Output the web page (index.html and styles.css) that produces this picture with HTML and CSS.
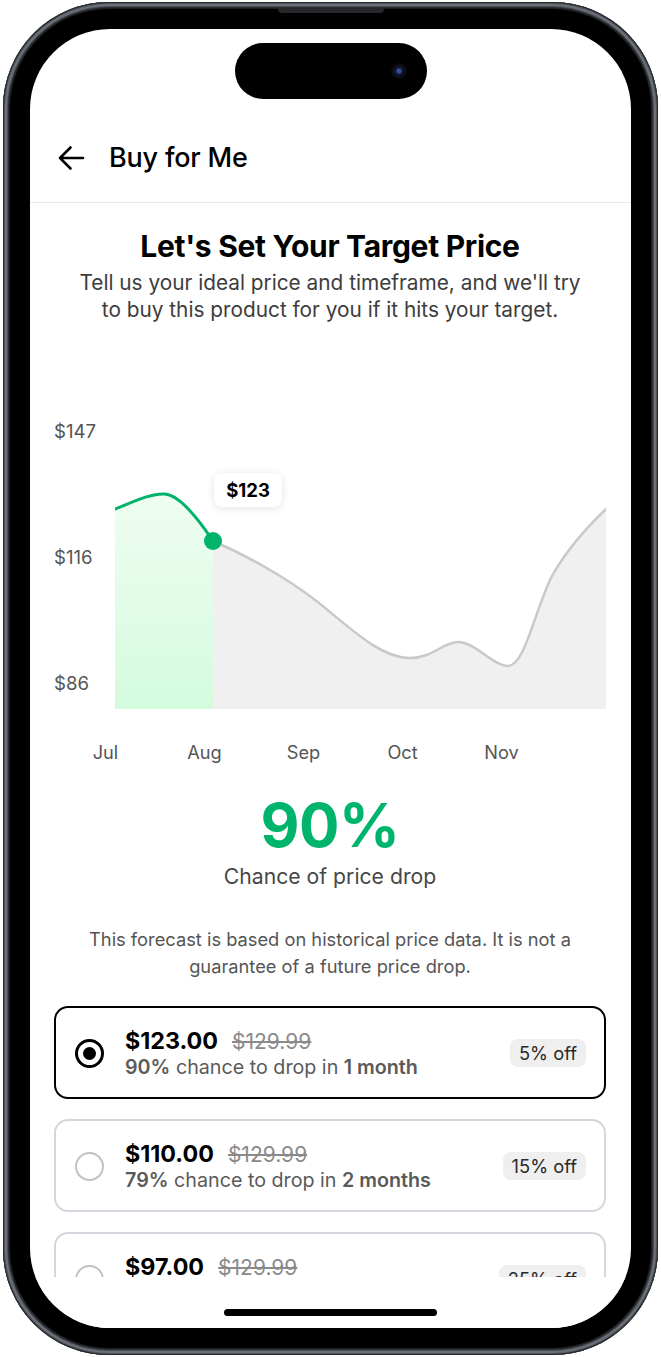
FILE: index.html
```html
<!DOCTYPE html>
<html lang="en">
<head>
<meta charset="utf-8">
<title>Buy for Me</title>
<link rel="stylesheet" href="styles.css">
</head>
<body>
<div class="page">
  <div class="phone">
    <span class="side-btn btn-action"></span>
    <span class="side-btn btn-vol-up"></span>
    <span class="side-btn btn-vol-down"></span>
    <span class="side-btn btn-power"></span>
    <span class="speaker"></span>
    <div class="bezel">
      <div class="screen">
        <div class="status">
          <div class="island"><span class="cam"></span></div>
        </div>
        <header class="appbar">
          <svg class="back" viewBox="0 0 28 26" width="28" height="26" aria-hidden="true">
            <path d="M26 13 H3 M13.5 2.5 L3 13 L13.5 23.5" fill="none" stroke="#000" stroke-width="2.6" stroke-linecap="round" stroke-linejoin="round"/>
          </svg>
          <h1 class="appbar-title">Buy for Me</h1>
        </header>
        <main class="content">
          <h2 class="heading">Let's Set Your Target Price</h2>
          <p class="sub">Tell us your ideal price and timeframe, and we'll try to buy this product for you if it hits your target.</p>

          <section class="chart">
            <div class="yaxis">
              <span>$147</span>
              <span>$116</span>
              <span>$86</span>
            </div>
            <div class="plot">
              <svg viewBox="0 0 491 290" width="491" height="290" aria-hidden="true">
                <defs>
                  <linearGradient id="greenFill" x1="0" y1="0" x2="0" y2="1">
                    <stop offset="0" stop-color="#effdf2"/>
                    <stop offset="1" stop-color="#d4fbde"/>
                  </linearGradient>
                </defs>
                <path d="M0,90 C18,83 36,74 50,75 C64,76 82,98 98,122 L98,290 L0,290 Z" fill="url(#greenFill)"/>
                <path d="M98,122 C140,140 185,167 215,193 C245,218 270,239 295,239 C318,239 328,223 343,223 C360,223 378,247 393,247 C410,247 420,190 437,157 C450,134 468,112 491,90 L491,290 L98,290 Z" fill="#f0f0f0"/>
                <path d="M98,122 C140,140 185,167 215,193 C245,218 270,239 295,239 C318,239 328,223 343,223 C360,223 378,247 393,247 C410,247 420,190 437,157 C450,134 468,112 491,90" fill="none" stroke="#c9c9c9" stroke-width="2.5" stroke-linecap="round"/>
                <path d="M0,90 C18,83 36,74 50,75 C64,76 82,98 98,122" fill="none" stroke="#00b36b" stroke-width="3" stroke-linecap="round"/>
                <circle cx="98" cy="122" r="9" fill="#00b36b"/>
              </svg>
              <div class="tip">$123</div>
            </div>
            <div class="xaxis">
              <span>Jul</span>
              <span>Aug</span>
              <span>Sep</span>
              <span>Oct</span>
              <span>Nov</span>
            </div>
          </section>

          <div class="stat">90%</div>
          <div class="stat-label">Chance of price drop</div>
          <p class="note">This forecast is based on historical price data. It is not a guarantee of a future price drop.</p>

          <div class="options">
            <div class="option selected">
              <span class="radio"></span>
              <div class="option-info">
                <div class="price-row"><span class="price">$123.00</span><span class="was">$129.99</span></div>
                <div class="chance"><b>90%</b> chance to drop in <b>1 month</b></div>
              </div>
              <span class="badge">5% off</span>
            </div>
            <div class="option">
              <span class="radio"></span>
              <div class="option-info">
                <div class="price-row"><span class="price">$110.00</span><span class="was">$129.99</span></div>
                <div class="chance"><b>79%</b> chance to drop in <b>2 months</b></div>
              </div>
              <span class="badge">15% off</span>
            </div>
            <div class="option">
              <span class="radio"></span>
              <div class="option-info">
                <div class="price-row"><span class="price">$97.00</span><span class="was">$129.99</span></div>
                <div class="chance"><b>65%</b> chance to drop in <b>3 months</b></div>
              </div>
              <span class="badge">25% off</span>
            </div>
          </div>
        </main>
        <div class="home"><span class="indicator"></span></div>
      </div>
    </div>
  </div>
</div>
</body>
</html>
```
FILE: styles.css
```css
* { box-sizing: border-box; }

html, body {
  margin: 0;
  padding: 0;
  background: #ffffff;
}

body {
  font-family: Inter, "Noto Sans", "Liberation Sans", sans-serif;
  color: #000;
}

.page {
  padding: 2px 3px;
}

.phone {
  position: relative;
  width: 655px;
  height: 1353px;
  padding: 7px;
  border-radius: 106px;
  background: #1f2023;
  box-shadow:
    inset 0 0 0 1px #26282b,
    inset 0 0 0 2px #50545b,
    inset 0 0 0 4px #6b7078,
    inset 0 0 0 5px #4b4f56,
    inset 0 0 0 6px #2a2c30;
}

.side-btn {
  position: absolute;
  z-index: -1;
  width: 6px;
  border-radius: 2px;
  background: linear-gradient(90deg, #2c2e32, #5d6168 60%, #3a3d42);
}
.btn-action { left: -3px; top: 263px; height: 55px; }
.btn-vol-up { left: -3px; top: 363px; height: 104px; }
.btn-vol-down { left: -3px; top: 495px; height: 104px; }
.btn-power { right: -3px; top: 435px; height: 164px; }

.speaker {
  position: absolute;
  top: 6px;
  left: 50%;
  width: 106px;
  height: 5px;
  margin-left: -53px;
  border-radius: 0 0 4px 4px;
  background: #26282c;
}

.bezel {
  height: 100%;
  padding: 20px;
  border-radius: 99px;
  background: #000;
}

.screen {
  height: 100%;
  border-radius: 80px;
  background: #fff;
  overflow: hidden;
  display: flex;
  flex-direction: column;
}

/* status / island */
.status {
  height: 85px;
  flex: none;
  display: flex;
  justify-content: center;
  padding-top: 14px;
}
.island {
  width: 192px;
  height: 56px;
  border-radius: 28px;
  background: #000;
  display: flex;
  align-items: center;
  justify-content: flex-end;
  padding-right: 20px;
}
.cam {
  width: 16px;
  height: 16px;
  border-radius: 50%;
  background: radial-gradient(circle at 50% 50%, #3a4c9a 0 2px, #141a3a 3px, #0b0c14 6px, #08080c 8px);
}

/* app bar */
.appbar {
  height: 89px;
  flex: none;
  display: flex;
  align-items: center;
  gap: 24px;
  padding-left: 27px;
  border-bottom: 1px solid #e7e7e7;
}
.back { display: block; flex: none; }
.appbar-title {
  margin: 0;
  font-size: 27px;
  font-weight: 500;
  letter-spacing: -0.2px;
  line-height: 32px;
}

/* content */
.content {
  flex: 1;
  min-height: 0;
  overflow: hidden;
  padding: 26px 25px 0 24px;
  text-align: center;
}

.heading {
  margin: 0;
  font-size: 30px;
  font-weight: 700;
  line-height: 34px;
  letter-spacing: -0.3px;
}

.sub {
  margin: 6px auto 0;
  max-width: 514px;
  font-size: 20.8px;
  line-height: 27px;
  color: #3d3d3d;
}

/* chart */
.chart {
  margin-top: 96px;
  display: grid;
  grid-template-columns: 61px 491px;
  text-align: left;
}
.yaxis {
  display: flex;
  flex-direction: column;
  gap: 104px;
  padding-top: 1px;
  font-size: 18.6px;
  line-height: 22px;
  color: #555;
}
.plot {
  position: relative;
  height: 290px;
}
.plot svg { display: block; }
.tip {
  position: absolute;
  left: 99px;
  top: 54px;
  width: 68px;
  height: 34px;
  border-radius: 8px;
  background: #fff;
  box-shadow: 0 1px 8px rgba(0, 0, 0, 0.12);
  font-size: 18.5px;
  font-weight: 700;
  line-height: 34px;
  text-align: center;
}
.xaxis {
  grid-column: 1 / -1;
  margin-top: 32px;
  padding-left: 2px;
  display: grid;
  grid-template-columns: repeat(5, 99px);
  font-size: 18.2px;
  line-height: 22px;
  color: #555;
  text-align: center;
}

/* stat */
.stat {
  margin-top: 27px;
  font-size: 60px;
  font-weight: 700;
  line-height: 70px;
  letter-spacing: -0.5px;
  color: #00b46c;
}
.stat-label {
  margin-top: 3px;
  font-size: 21.2px;
  line-height: 26px;
  color: #474747;
}
.note {
  margin: 37px auto 0;
  max-width: 510px;
  font-size: 18.3px;
  line-height: 27px;
  color: #555;
}

/* options */
.options {
  margin-top: 26px;
  display: flex;
  flex-direction: column;
  gap: 20px;
  text-align: left;
}
.option {
  flex: none;
  height: 93px;
  display: flex;
  align-items: center;
  gap: 21px;
  padding: 1px 18px 0 19px;
  border: 2px solid #d3d7dd;
  border-radius: 14px;
}
.option.selected { border-color: #000; }

.radio {
  flex: none;
  width: 29px;
  height: 29px;
  border-radius: 50%;
  border: 2.5px solid #c2c2c2;
  display: flex;
  align-items: center;
  justify-content: center;
}
.selected .radio { border: 3px solid #000; }
.selected .radio::after {
  content: "";
  width: 13px;
  height: 13px;
  border-radius: 50%;
  background: #000;
}

.option-info { flex: 1; min-width: 0; }
.price-row {
  display: flex;
  align-items: baseline;
  gap: 14px;
}
.price {
  font-size: 23.3px;
  font-weight: 700;
  line-height: 27px;
}
.was {
  font-size: 21px;
  line-height: 27px;
  color: #8a8a8a;
  text-decoration: line-through;
}
.chance {
  font-size: 19.7px;
  line-height: 25px;
  color: #5a5a5a;
}
.chance b { font-weight: 600; }

.badge {
  flex: none;
  height: 28px;
  padding: 0 9px;
  border-radius: 8px;
  background: #efefef;
  font-size: 18.3px;
  line-height: 28px;
  color: #2a2a2a;
}

/* home indicator */
.home {
  height: 51px;
  flex: none;
  display: flex;
  justify-content: center;
  padding-top: 32px;
  background: #fff;
}
.indicator {
  width: 213px;
  height: 7px;
  border-radius: 4px;
  background: #000;
}
```
